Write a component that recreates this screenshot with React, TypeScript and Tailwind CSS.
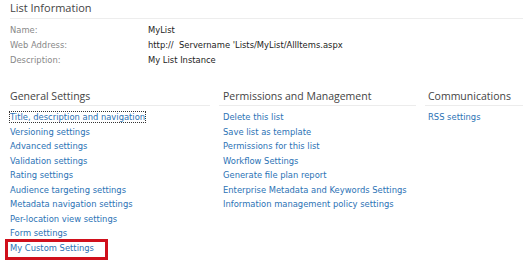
const general = [
  'Title, description and navigation',
  'Versioning settings',
  'Advanced settings',
  'Validation settings',
  'Rating settings',
  'Audience targeting settings',
  'Metadata navigation settings',
  'Per-location view settings',
  'Form settings',
  'My Custom Settings',
];

const permissions = [
  'Delete this list',
  'Save list as template',
  'Permissions for this list',
  'Workflow Settings',
  'Generate file plan report',
  'Enterprise Metadata and Keywords Settings',
  'Information management policy settings',
];

const communications = ['RSS settings'];

const headFont = "font-['Open_Sans','Liberation_Sans',sans-serif]";
const bodyFont = "font-['DejaVu_Sans','Liberation_Sans',sans-serif]";

const SectionHeader = ({ title, pad }: { title: string; pad: string }) => (
  <div className={`${headFont} ${pad} h-[19px] border-b border-[#ececec] text-[10.5px] leading-[18px] text-[#444]`}>{title}</div>
);

const LinkList = ({ items, pad }: { items: string[]; pad: string }) => (
  <ul className={`${bodyFont} ${pad} mt-[4px] text-[8.4px] text-[#2b72b5]`}>
    {items.map((item, i) => (
      <li key={item} className="relative h-[14.55px] leading-[14.55px]">
        {i === 0 && pad === 'pl-0' ? (
          <span className="outline-1 outline-dotted outline-[#333]">{item}</span>
        ) : (
          <span>{item}</span>
        )}
        {item === 'My Custom Settings' && (
          <span className="absolute -left-[5px] -top-[2px] h-[21px] w-[103px] border-[3px] border-[#d0101c]" />
        )}
      </li>
    ))}
  </ul>
);

export default function App() {
  return (
    <div className="w-[523px] h-[270px] bg-white overflow-hidden">
      <div className={`${headFont} ml-[10px] h-[19px] border-b border-[#ededed] text-[11px] leading-[16px] text-[#444]`}>List Information</div>
      <div className={`${bodyFont} mt-[4px] ml-[10px] text-[8.4px]`}>
        {[
          ['Name:', 'MyList'],
          ['Web Address:', "http://  Servername 'Lists/MyList/AllItems.aspx"],
          ['Description:', 'My List Instance'],
        ].map(([label, value]) => (
          <div key={label} className="flex h-[15px] items-center">
            <span className="w-[138px] text-[#888]">{label}</span>
            <span className="whitespace-pre text-[#222]">{value}</span>
          </div>
        ))}
      </div>
      <div className="mt-[19px] flex">
        <div className="ml-[10px] w-[200px]">
          <SectionHeader title="General Settings" pad="pl-0" />
          <LinkList items={general} pad="pl-0" />
        </div>
        <div className="ml-[9px] w-[197px]">
          <SectionHeader title="Permissions and Management" pad="pl-[4px]" />
          <LinkList items={permissions} pad="pl-[4px]" />
        </div>
        <div className="ml-[9px] flex-1">
          <SectionHeader title="Communications" pad="pl-[3px]" />
          <LinkList items={communications} pad="pl-[3px]" />
        </div>
      </div>
    </div>
  );
}
